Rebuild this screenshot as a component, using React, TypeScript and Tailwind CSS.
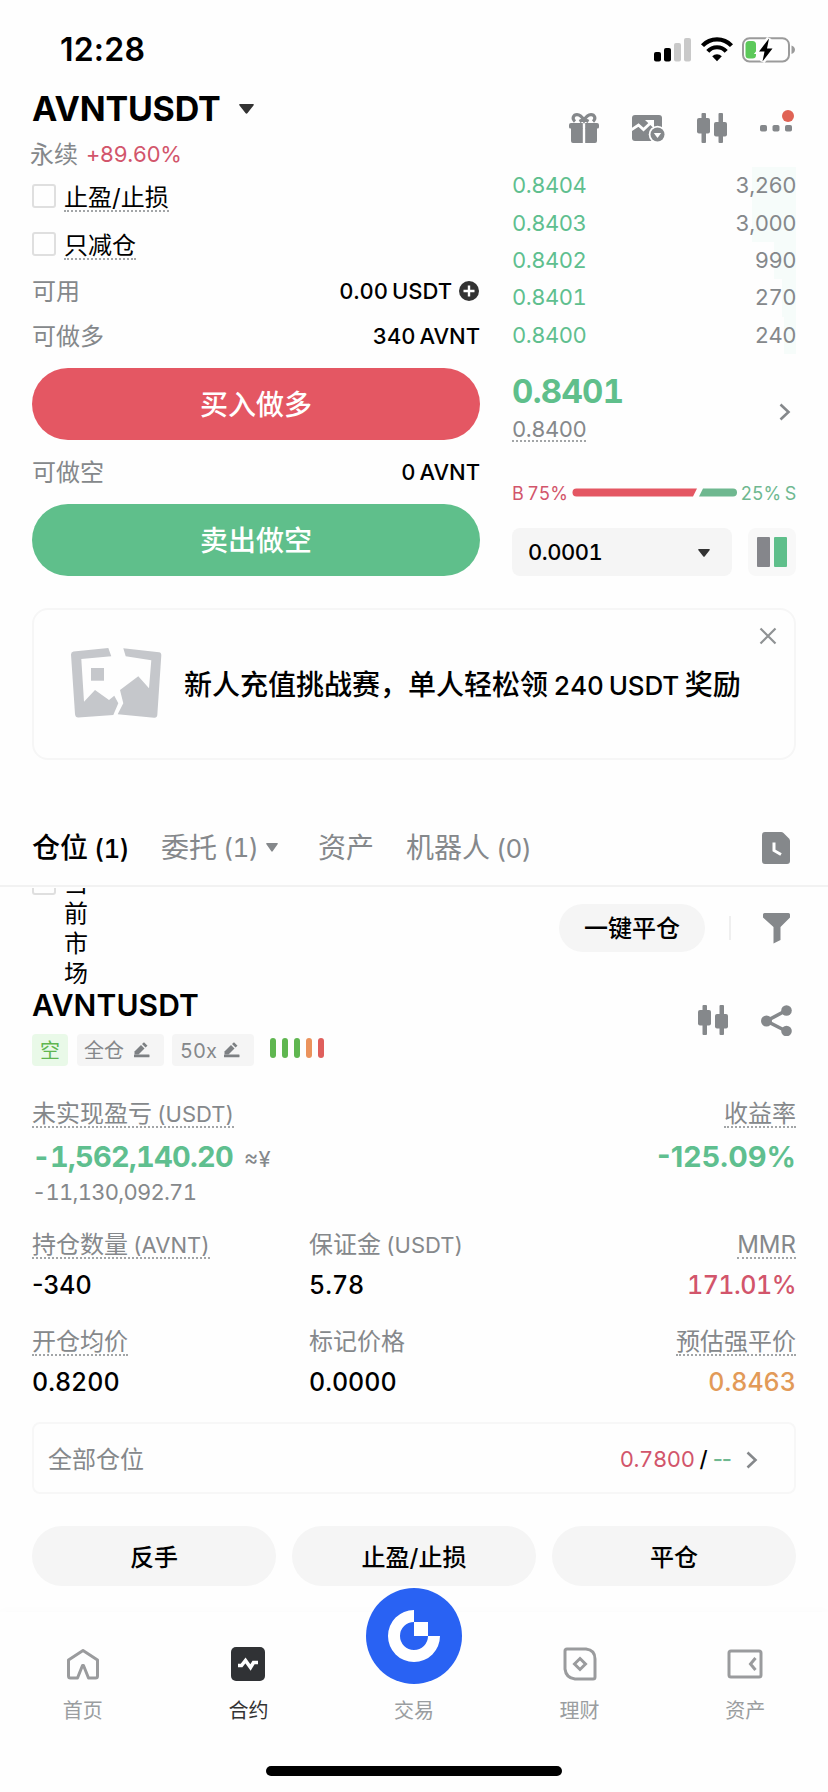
import type { ReactNode } from 'react'
import clsx from 'clsx'

const bids = [
  { price: '0.8404', amount: '3,260', bar: 'w-11' },
  { price: '0.8403', amount: '3,000', bar: 'w-11' },
  { price: '0.8402', amount: '990', bar: 'w-[22px]' },
  { price: '0.8401', amount: '270', bar: 'w-3.5' },
  { price: '0.8400', amount: '240', bar: 'w-3' },
]

const levels = ['bg-[#5fb650]', 'bg-[#5fb650]', 'bg-[#5fb650]', 'bg-[#eb935c]', 'bg-[#df5f5c]']

function Candles() {
  return (
    <svg width="30" height="30" viewBox="0 0 30 30" fill="#85888b">
      <rect x="4.5" y="0" width="4.5" height="30" rx="1" />
      <rect x="0" y="5" width="13" height="15.500" rx="2" />
      <rect x="21.500" y="0" width="4.500" height="30" rx="1" />
      <rect x="17" y="9" width="13" height="14.500" rx="2" />
    </svg>
  )
}

function Caret({ className }: { className?: string }) {
  return (
    <svg viewBox="0 0 14 10" className={className} preserveAspectRatio="none">
      <path d="M1 0H13Q14.500 0 13.500 1.500L8 9Q7 10.500 6 9L0.500 1.500Q-0.500 0 1 0Z" fill="currentColor" />
    </svg>
  )
}

function Chevron() {
  return (
    <svg width="12" height="18" viewBox="0 0 12 18" fill="none" stroke="#85888b" strokeWidth="2.6">
      <path d="M1.500 1.500L9.500 9L1.500 16.500" />
    </svg>
  )
}

function Pencil() {
  return (
    <svg width="16" height="16" viewBox="0 0 16 16" fill="#7d8083">
      <path d="M0.500 12.500V9.500L7 3L10.500 6.500L4.500 12.500Z" />
      <path d="M8 2L10 0.300L13.500 3.700L11.500 5.600Z" />
      <rect x="0" y="12.500" width="15.500" height="2.800" rx="0.5" />
    </svg>
  )
}

function Dotted({ children, className }: { children: ReactNode; className?: string }) {
  return <span className={clsx('border-b-2 border-dotted border-[#a2a5a7]', className)}>{children}</span>
}

function Checkbox() {
  return <span className="h-6 w-6 shrink-0 rounded-[3px] border-2 border-[#dfdfdf]" />
}

function StatusBar() {
  return (
    <div className="flex h-[88px] items-center pl-[60px] pr-8 pt-3">
      <span className="text-[32px] font-semibold leading-9 tracking-[0.2px] proportional-nums">12:28</span>
      <svg className="ml-auto" width="142" height="26" viewBox="0 0 142 26">
        <rect x="0" y="15" width="7" height="9.500" rx="2" />
        <rect x="10" y="11" width="7" height="13.500" rx="2" />
        <rect x="20" y="6" width="7" height="18.500" rx="2" fill="#c9c9c9" />
        <rect x="30" y="1" width="7" height="23.500" rx="2" fill="#c9c9c9" />
        <g fill="none" stroke="#000" strokeWidth="4.200">
          <path d="M48.500 8.600A20 20 0 0 1 77.500 8.600" />
          <path d="M53.800 14.300A12.500 12.500 0 0 1 72.200 14.300" />
        </g>
        <path d="M58.200 19.200A7 7 0 0 1 67.800 19.200L63 24.300Z" />
        <rect x="89" y="1.200" width="46" height="23.200" rx="6.500" fill="none" stroke="#9b9b9b" strokeWidth="2" />
        <path d="M137.500 8.500Q141 10 141 12.800Q141 15.600 137.500 17Z" fill="#9b9b9b" />
        <rect x="91.500" y="4" width="10.500" height="17.500" rx="3.500" fill="#5cc95a" />
        <path d="M115 1.500L105 14.500H110.500L108.500 24.500L118.500 11.500H113Z" fill="#000" stroke="#fff" strokeWidth="5" paintOrder="stroke" />
      </svg>
    </div>
  )
}

function Header() {
  return (
    <header className="flex h-[79px] px-8">
      <div>
        <div className="flex h-[42px] items-center">
          <h1 className="text-[34px] font-bold leading-[42px] tracking-[-0.2px]">AVNTUSDT</h1>
          <Caret className="ml-[19px] h-[10px] w-[15px] text-[#333]" />
        </div>
        <div className="-ml-0.5 flex h-12 items-center pt-0.5 text-2xl text-[#85888b]">
          永续<span className="ml-2 text-[22px] tracking-[-0.5px] text-[#d2556b]">+89.60%</span>
        </div>
      </div>
      <div className="ml-auto mr-1 mt-[25px] flex h-[30px]">
        <svg width="30" height="30" viewBox="0 0 30 30" fill="#85888b">
          <path d="M2 10H13.800V15.500H1.500A1.500 1.500 0 0 1 0 14V12A2 2 0 0 1 2 10ZM16.200 10H28A2 2 0 0 1 30 12V14A1.500 1.500 0 0 1 28.500 15.500H16.200Z" />
          <path d="M2 15H13.800V30H4A2 2 0 0 1 2 28ZM16.200 15H28V28A2 2 0 0 1 26 30H16.200Z" />
          <path d="M6 8.500C2.500 5.500 4.500 1.600 8 1.600C11.500 1.600 13.500 4.500 15 7.500C16.500 4.500 18.500 1.600 22 1.600C25.500 1.600 27.500 5.500 24 8.500M10.500 8.500L15 6L19.500 8.500" fill="none" stroke="#85888b" strokeWidth="3.200" />
        </svg>
        <svg className="ml-[33px]" width="33" height="30" viewBox="0 0 33 30">
          <rect x="0" y="2" width="30" height="26" rx="3" fill="#85888b" />
          <path d="M-1 17L6.500 12L11.500 16.500L19 9.500" fill="none" stroke="#fff" strokeWidth="2.800" />
          <path d="M13 7H22V15.500Z" fill="#fff" />
          <circle cx="25.500" cy="21.500" r="8.800" fill="#fff" />
          <circle cx="25.500" cy="21.500" r="7" fill="#85888b" />
          <path d="M21.800 20H29.200L25.500 25Z" fill="#fff" />
        </svg>
        <span className="ml-8">
          <Candles />
        </span>
        <svg className="ml-[33px] overflow-visible" width="32" height="30" viewBox="0 0 32 30" fill="#85888b">
          <rect x="0" y="12" width="7" height="6.500" rx="1.800" />
          <rect x="12.500" y="12" width="7" height="6.500" rx="1.800" />
          <rect x="25" y="12" width="7" height="6.500" rx="1.800" />
          <circle cx="28" cy="3" r="6" fill="#e06355" />
        </svg>
      </div>
    </header>
  )
}

function OrderForm() {
  return (
    <div className="flex w-[448px] flex-col text-2xl">
      <label className="flex h-[58px] items-center gap-2">
        <Checkbox />
        <Dotted className="mt-0.5 h-[30px] leading-[32px]">止盈/止损</Dotted>
      </label>
      <label className="flex h-[38px] items-center gap-2">
        <Checkbox />
        <Dotted className="mt-0.5 h-[30px] leading-[32px]">只减仓</Dotted>
      </label>
      <div className="flex h-14 items-center justify-between">
        <span className="pt-0.5 text-[#85888b]">可用</span>
        <span className="flex items-center pt-px text-[22px] font-medium">
          0.00 USDT
          <svg className="ml-[7px] mr-px" width="20" height="20" viewBox="0 0 20 20">
            <circle cx="10" cy="10" r="10" fill="#333" />
            <path d="M10 4.500V15.500M4.500 10H15.500" stroke="#fff" strokeWidth="2.400" />
          </svg>
        </span>
      </div>
      <div className="flex h-[34px] items-center justify-between">
        <span className="pt-0.5 text-[#85888b]">可做多</span>
        <span className="pt-0.5 text-[22px] font-medium">340 AVNT</span>
      </div>
      <button className="mt-[15px] h-[72px] rounded-full bg-[#e45763] pt-[3px] text-[28px] font-medium text-white">买入做多</button>
      <div className="flex h-16 items-center justify-between">
        <span className="pt-0.5 text-[#85888b]">可做空</span>
        <span className="pt-0.5 text-[22px] font-medium">0 AVNT</span>
      </div>
      <button className="h-[72px] rounded-full bg-[#5fbf8b] pt-[3px] text-[28px] font-medium text-white">卖出做空</button>
    </div>
  )
}

function OrderBook() {
  return (
    <div className="flex w-[284px] flex-col">
      {bids.map((b) => (
        <div key={b.price} className="relative flex h-[37.4px] items-center justify-between text-[22px] tracking-[-0.5px]">
          <span className={clsx('absolute right-0 top-0 h-full bg-[#f6fcfa]', b.bar)} />
          <span className="text-[#5fbf8f]">{b.price}</span>
          <span className="relative text-[#85888b]">{b.amount}</span>
        </div>
      ))}
      <div className="flex items-center justify-between pt-[18px]">
        <div className="flex flex-col items-start">
          <div className="text-[33px] font-bold leading-[38px] tracking-[-0.7px] text-[#5fbf8b]">0.8401</div>
          <Dotted className="h-8 text-[22px] leading-[38px] tracking-[-0.5px] text-[#85888b]">0.8400</Dotted>
        </div>
        <div className="mr-[5px] mt-2.5">
          <Chevron />
        </div>
      </div>
      <div className="mt-auto flex h-[26px] items-center text-[18px] leading-[26px] tracking-[-0.2px] [word-spacing:-1px]">
        <span className="w-[60px] whitespace-nowrap text-[#d2556b]">B 75%</span>
        <svg className="mb-[3px]" width="166" height="9" viewBox="0 0 166 9">
          <path d="M4.500 0.500H125L121 8.500H4.500A4 4 0 0 1 4.500 0.500Z" fill="#e45763" />
          <path d="M131 0.500H161A4 4 0 0 1 161 8.500H127Z" fill="#6fb890" />
        </svg>
        <span className="ml-auto whitespace-nowrap text-[#6fb890]">25% S</span>
      </div>
      <div className="mt-[21px] flex justify-between">
        <div className="flex h-12 w-[220px] items-center justify-between rounded-lg bg-[#f5f5f5] pl-4 pr-[22px] pt-px text-[22px] font-medium tracking-[-0.5px]">
          0.0001
          <Caret className="h-2 w-3 text-[#333]" />
        </div>
        <div className="flex h-12 w-12 items-center justify-center gap-1 rounded-lg bg-[#f8f8f8]">
          <span className="h-[30px] w-[13px] rounded-[1px] bg-[#85868b]" />
          <span className="h-[30px] w-[13px] rounded-[1px] bg-[#5fbf8b]" />
        </div>
      </div>
    </div>
  )
}

function Banner() {
  return (
    <div className="relative mx-8 mt-8 flex h-[152px] items-center rounded-2xl border-2 border-[#f6f6f6] pl-9">
      <svg width="92" height="72" viewBox="0 0 92 72" fill="#c5c7cb">
        <path d="M1 6.500Q1 4 3.500 3.500L38.300 0L41.300 8.300L11.300 11L14 53.700L25 42L39 52L44.300 47.700L48.300 55.300L43.300 67L8.300 69.500Q5.300 69.500 5 66Z" />
        <path d="M53.300 0.300L89 4.300Q91.500 4.600 91.300 7.500L87.300 67Q87 70 84 69.700L47.700 66.300L53.300 55.300L50 42L68.300 28.300L79 40.300L81.300 12.300L55.700 8.300Z" />
        <rect x="21" y="20" width="13" height="12.700" />
      </svg>
      <p className="ml-[22px] whitespace-nowrap pt-0.5 text-[28px] font-medium [word-spacing:-2px]">
        新人充值挑战赛，单人轻松领 <span className="text-[26px] tracking-[-0.1px]">240 USDT</span> 奖励
      </p>
      <svg className="absolute right-[17px] top-[17px]" width="18" height="18" viewBox="0 0 18 18" stroke="#8f9294" strokeWidth="2.200">
        <path d="M1.500 1.500L16.500 16.500M16.500 1.500L1.500 16.500" />
      </svg>
    </div>
  )
}

function Count({ children }: { children: ReactNode }) {
  return <span className="ml-1.5 text-[26px] tracking-[-0.7px]">{children}</span>
}

function Tabs() {
  return (
    <div className="mt-[49px] flex h-[78px] items-center border-b-2 border-[#f2f2f2] px-8 pt-px text-[28px] text-[#85888b]">
      <span className="w-[129px] font-medium text-black">
        仓位<Count>(1)</Count>
      </span>
      <span className="flex w-[157px] items-center">
        委托<Count>(1)</Count>
        <Caret className="ml-2 h-[9px] w-3" />
      </span>
      <span className="w-[88px]">资产</span>
      <span>
        机器人<Count>(0)</Count>
      </span>
      <svg className="ml-auto mr-1.5" width="28" height="32" viewBox="0 0 28 32">
        <path d="M3 0H19Q20.500 0 21.500 1L27 6.500Q28 7.500 28 9V29A3 3 0 0 1 25 32H3A3 3 0 0 1 0 29V3A3 3 0 0 1 3 0Z" fill="#85888b" />
        <path d="M12 10.500V18.500L19 22.500" fill="none" stroke="#fff" strokeWidth="3" />
      </svg>
    </div>
  )
}

function Toolbar() {
  return (
    <div className="mt-px flex h-[100px] items-start overflow-hidden px-8">
      <div className="-mt-[17px] flex items-start gap-2">
        <Checkbox />
        <span className="-mt-0.5 w-6 text-2xl leading-[30px]">当前市场</span>
      </div>
      <button className="ml-auto mt-4 h-12 w-[146px] rounded-full bg-[#f5f5f5] pt-0.5 text-2xl font-medium">一键平仓</button>
      <span className="ml-6 mt-7 h-6 w-0.5 bg-[#efefef]" />
      <svg className="ml-8 mr-1.5 mt-[25px]" width="27" height="31" viewBox="0 0 27 31">
        <path d="M1.500 0H25.500Q27 0 27 1.500V4.500L17.500 14V27L10.500 30.500V14L0 4.500V1.500Q0 0 1.500 0Z" fill="#85888b" />
      </svg>
    </div>
  )
}

type FieldProps = { label: string; dotted?: boolean; right?: boolean; children: ReactNode }

function Field({ label, dotted = true, right, children }: FieldProps) {
  const text = 'h-[30px] text-2xl font-normal leading-[32px] text-[#85888b]'
  const [name, unit] = label.split(' ')
  const content = (
    <>
      {name}
      {unit && <span className="ml-[5px] text-[22px]">{unit}</span>}
    </>
  )
  return (
    <div className={clsx('flex flex-col', right ? 'items-end' : 'items-start')}>
      {dotted ? <Dotted className={text}>{content}</Dotted> : <span className={text}>{content}</span>}
      {children}
    </div>
  )
}

function Position() {
  return (
    <section className="px-8">
      <div className="flex h-[78px] justify-between">
        <div>
          <h2 className="text-[30px] font-semibold leading-[34px] tracking-[0.1px]">AVNTUSDT</h2>
          <div className="mt-3 flex h-8 items-center text-xl text-[#85888b]">
            <span className="flex h-8 w-9 items-center justify-center rounded bg-[#e9f9e8] pt-0.5 text-[#5fb650]">空</span>
            <span className="ml-[9px] flex h-8 w-[87px] items-center justify-between rounded bg-[#f5f5f5] pl-[7px] pr-[14px]">
              <span className="pt-0.5">全仓</span>
              <Pencil />
            </span>
            <span className="ml-2 flex h-8 w-[82px] items-center justify-between rounded bg-[#f5f5f5] pl-2 pr-[14px]">
              <span className="pt-0.5">50x</span>
              <Pencil />
            </span>
            <span className="mb-1 ml-4 flex gap-1.5">
              {levels.map((color, i) => (
                <span key={i} className={clsx('h-5 w-1.5 rounded-full', color)} />
              ))}
            </span>
          </div>
        </div>
        <div className="mr-1 mt-[17px] flex gap-[33px]">
          <Candles />
          <svg width="31" height="31" viewBox="0 0 31 31" fill="#85888b">
            <path d="M25 5.500L5.500 16L25 26" fill="none" stroke="#85888b" strokeWidth="3.600" />
            <circle cx="25.500" cy="5.500" r="5.300" />
            <circle cx="5.500" cy="16" r="5.500" />
            <circle cx="25.500" cy="26" r="5.300" />
          </svg>
        </div>
      </div>

      <div className="mt-[32px] flex h-[131px] justify-between">
        <Field label="未实现盈亏 (USDT)">
          <div className="mt-[11px] flex items-baseline">
            <span className="text-[29px] font-bold leading-9 tracking-[-0.75px] text-[#5fbf8f]">-1,562,140.20</span>
            <span className="ml-[11px] text-[22px] text-[#85888b]">≈¥</span>
          </div>
          <div className="text-[22px] leading-8 tracking-[-0.75px] text-[#85888b]">-11,130,092.71</div>
        </Field>
        <Field label="收益率" right>
          <div className="mt-[11px] text-[29px] font-bold leading-9 text-[#5fbf8f] proportional-nums">-125.09%</div>
        </Field>
      </div>

      <div className="grid grid-cols-[277px_1fr_auto] gap-y-[23px] text-[25px] font-medium leading-9 *:h-[74px]">
        <Field label="持仓数量 (AVNT)"><div className="mt-2 proportional-nums">-340</div></Field>
        <Field label="保证金 (USDT)" dotted={false}><div className="mt-2">5.78</div></Field>
        <Field label="MMR" right><div className="mt-2 tracking-[-0.5px] text-[#d2556b]">171.01%</div></Field>
        <Field label="开仓均价"><div className="mt-2">0.8200</div></Field>
        <Field label="标记价格" dotted={false}><div className="mt-2">0.0000</div></Field>
        <Field label="预估强平价" right><div className="mt-2 text-[#e29a58]">0.8463</div></Field>
      </div>

      <div className="mt-[22px] flex h-[72px] items-center rounded-lg border-2 border-[#f7f7f7] pl-3.5 pr-9 pt-1 text-2xl text-[#85888b]">
        全部仓位
        <span className="ml-auto mr-[15px] flex gap-[5px] text-[22px]">
          <span className="tracking-[-0.4px] text-[#d2556b]">0.7800</span>
          <span className="font-medium text-black">/</span>
          <span className="font-medium tracking-[-1px] text-[#6fb890] proportional-nums">--</span>
        </span>
        <Chevron />
      </div>

      <div className="mt-8 grid grid-cols-3 gap-4 text-2xl font-medium *:h-[60px] *:rounded-full *:bg-[#f5f5f5] *:pt-[3px]">
        <button>反手</button>
        <button>止盈/止损</button>
        <button>平仓</button>
      </div>
    </section>
  )
}

function NavItem({ label, active, children }: { label: string; active?: boolean; children: ReactNode }) {
  return (
    <div className={clsx('flex flex-col items-center text-xl', active ? 'text-[#333]' : 'text-[#9a9da0]')}>
      <div className="flex h-[84px] items-center pt-5">{children}</div>
      <span className="leading-[30px]">{label}</span>
    </div>
  )
}

function BottomNav() {
  return (
    <nav className="mt-auto h-[180px] shadow-[0_-3px_8px_rgba(0,0,0,0.012)]">
      <div className="grid grid-cols-5">
        <NavItem label="首页">
          <svg width="34" height="32" viewBox="0 0 34 32" fill="none" stroke="#9a9b9d" strokeWidth="3" strokeLinejoin="round">
            <path d="M17 2.500L31.500 12V28Q31.500 30 29.500 30H22.500L17.500 17.500H16.500L11.500 30H4.500Q2.500 30 2.500 28V12Z" />
          </svg>
        </NavItem>
        <NavItem label="合约" active>
          <svg width="34" height="34" viewBox="0 0 34 34">
            <rect width="34" height="34" rx="5" fill="#303235" />
            <path d="M7 18.500H10.500L14.500 13.500L19.500 20.500L22.500 15.500H27" fill="none" stroke="#fff" strokeWidth="3.600" />
          </svg>
        </NavItem>
        <NavItem label="交易">
          <svg className="-mt-[57px]" width="96" height="96" viewBox="0 0 96 96">
            <circle cx="48" cy="48" r="48" fill="#2962f3" />
            <path d="M48 22A26 26 0 1 0 74 48H62A14 14 0 1 1 48 34Z" fill="#fff" />
            <rect x="48" y="34" width="14" height="14" fill="#fff" />
          </svg>
        </NavItem>
        <NavItem label="理财">
          <svg width="34" height="34" viewBox="0 0 34 34" fill="none" stroke="#9a9b9d" strokeWidth="3">
            <path d="M4 2H23Q32 3 32 12V30Q32 32 30 32H12Q3 31 2 22V4Q2 2 4 2Z" />
            <path d="M17 11.500L22.500 17L17 22.500L11.500 17Z" />
          </svg>
        </NavItem>
        <NavItem label="资产">
          <svg width="36" height="30" viewBox="0 0 36 30" fill="none" stroke="#9a9b9d" strokeWidth="3">
            <rect x="2" y="2" width="32" height="26" rx="2" />
            <path d="M28.500 9L23.500 15L28.500 21" />
          </svg>
        </NavItem>
      </div>
      <div className="mx-auto mt-10 h-2.5 w-[296px] rounded-full bg-black" />
    </nav>
  )
}

export default function App() {
  return (
    <main className="flex h-[1792px] w-[828px] flex-col overflow-hidden bg-[#fefefe] font-['Inter','Noto_Sans_CJK_SC',sans-serif] tabular-nums text-black [word-spacing:-2px]">
      <StatusBar />
      <Header />
      <section className="flex h-[409px] justify-between px-8">
        <OrderForm />
        <OrderBook />
      </section>
      <Banner />
      <Tabs />
      <Toolbar />
      <Position />
      <BottomNav />
    </main>
  )
}
